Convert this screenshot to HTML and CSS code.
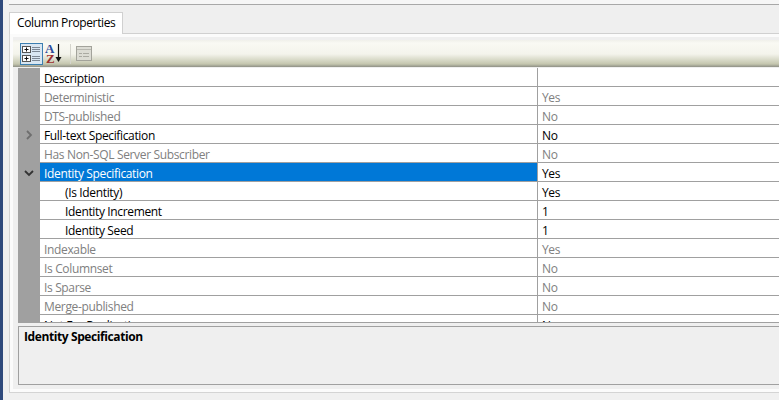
FILE: index.html
```html
<!DOCTYPE html>
<html lang="en">
<head>
    <meta charset="UTF-8">
    <title>Column Properties</title>
    <link rel="stylesheet" href="styles.css">
</head>
<body>
    <div class="window">
        <div class="top-rule"></div>
        <div class="tab-strip">
            <div class="tab">Column Properties</div>
        </div>
        <div class="panel">
            <div class="panel-inner">
                <div class="toolbar">
                    <button class="tool tool-active">
                        <svg width="21" height="20" viewBox="0 0 21 20">
                            <rect x="1.5" y="2.5" width="8" height="6" fill="#fff" stroke="#555"/>
                            <path d="M3.5 5.5h4M5.5 3.5v4" stroke="#111"/>
                            <rect x="1.5" y="11.5" width="8" height="6" fill="#fff" stroke="#555"/>
                            <path d="M3.5 14.5h4M5.5 12.5v4" stroke="#111"/>
                            <path d="M11 3.5h8M11 5.5h8M11 7.5h8M11 12.5h8M11 14.5h8M11 16.5h8" stroke="#7c8794"/>
                        </svg>
                    </button>
                    <div class="tool">
                        <svg width="20" height="22" viewBox="0 0 20 22">
                            <text x="0" y="10" class="sort-a">A</text>
                            <text x="1" y="20" class="sort-z">Z</text>
                            <path d="M13.5 1v15" stroke="#111" stroke-width="1.2"/>
                            <path d="M10.5 14h6l-3 5z" fill="#111"/>
                        </svg>
                    </div>
                    <div class="tool-sep"></div>
                    <div class="tool props-tool">
                        <svg width="18" height="18" viewBox="0 0 18 18">
                            <rect x="1.5" y="1.5" width="15" height="14" fill="#dcdcd4" stroke="#a3a39b"/>
                            <path d="M2 4.5h14" stroke="#b8b8b0"/>
                            <path d="M4 8.5h3M8 8.5h6M4 11.5h3M8 11.5h6" stroke="#aaaaa2"/>
                        </svg>
                    </div>
                </div>
                <div class="grid">
                    <div class="row"><div class="gutter"></div><div class="name">Description</div><div class="value"></div></div>
                    <div class="row muted"><div class="gutter"></div><div class="name">Deterministic</div><div class="value">Yes</div></div>
                    <div class="row muted"><div class="gutter"></div><div class="name">DTS-published</div><div class="value">No</div></div>
                    <div class="row">
                        <div class="gutter">
                            <svg width="10" height="10" viewBox="0 0 10 10"><path d="M3 1l4 4-4 4" fill="none" stroke="#6e6e6e" stroke-width="1.8"/></svg>
                        </div>
                        <div class="name">Full-text Specification</div><div class="value">No</div>
                    </div>
                    <div class="row muted"><div class="gutter"></div><div class="name">Has Non-SQL Server Subscriber</div><div class="value">No</div></div>
                    <div class="row selected">
                        <div class="gutter">
                            <svg width="10" height="10" viewBox="0 0 10 10"><path d="M1 3l4 4 4-4" fill="none" stroke="#333" stroke-width="1.8"/></svg>
                        </div>
                        <div class="name">Identity Specification</div><div class="value">Yes</div>
                    </div>
                    <div class="row child"><div class="gutter"></div><div class="name">(Is Identity)</div><div class="value">Yes</div></div>
                    <div class="row child"><div class="gutter"></div><div class="name">Identity Increment</div><div class="value">1</div></div>
                    <div class="row child"><div class="gutter"></div><div class="name">Identity Seed</div><div class="value">1</div></div>
                    <div class="row muted"><div class="gutter"></div><div class="name">Indexable</div><div class="value">Yes</div></div>
                    <div class="row muted"><div class="gutter"></div><div class="name">Is Columnset</div><div class="value">No</div></div>
                    <div class="row muted"><div class="gutter"></div><div class="name">Is Sparse</div><div class="value">No</div></div>
                    <div class="row muted"><div class="gutter"></div><div class="name">Merge-published</div><div class="value">No</div></div>
                    <div class="row"><div class="gutter"></div><div class="name">Not For Replication</div><div class="value">No</div></div>
                </div>
                <div class="help">Identity Specification</div>
            </div>
        </div>
    </div>
</body>
</html>
```

FILE: styles.css
```css
html, body {
    margin: 0;
    padding: 0;
    height: 100%;
    overflow: hidden;
}

body {
    font-family: "Open Sans", "Noto Sans", sans-serif;
    font-size: 12px;
    color: #000;
    background-color: #efefef;
}

.window {
    height: 400px;
    box-sizing: border-box;
    border-left: 3px solid #2f4a7c;
    padding-left: 1px;
    background-color: #f0f0f0;
    display: flex;
    flex-direction: column;
}

.top-rule {
    height: 4px;
    margin-left: 5px;
    background-color: #f6f6f6;
    border-bottom: 1px solid #a8a8a8;
    flex-shrink: 0;
}

.tab-strip {
    height: 29px;
    margin-left: 5px;
    box-sizing: border-box;
    padding-top: 7px;
    background-color: #efefef;
    border-bottom: 1px solid #d0d0d0;
    display: flex;
    flex-shrink: 0;
}

.tab {
    width: 114px;
    height: 22px;
    box-sizing: border-box;
    padding-left: 7px;
    line-height: 20px;
    background-color: #fff;
    border: 1px solid #d0d0d0;
    border-bottom: none;
    position: relative;
    letter-spacing: -0.38px;
}

.panel {
    height: 359px;
    margin-left: 5px;
    box-sizing: border-box;
    padding: 3px 0 3px 3px;
    background-color: #fbfbfb;
    border-left: 1px solid #d4d4d4;
    border-bottom: 1px solid #d4d4d4;
    flex-shrink: 0;
}

.panel-inner {
    height: 352px;
    box-sizing: border-box;
    padding-top: 3px;
    background-color: #efefef;
}

.toolbar {
    height: 27px;
    box-sizing: border-box;
    padding-left: 7px;
    display: flex;
    align-items: center;
    gap: 1px;
    background: linear-gradient(#f0f0ea 0, #f9f9f3 3px, #f4f4ec 14px, #c4c6ae 24px, #8f9086 27px);
}

.tool {
    width: 22px;
    height: 22px;
    box-sizing: border-box;
    padding: 0;
    border: 1px solid transparent;
    background: none;
    display: flex;
    align-items: center;
    justify-content: center;
}

.tool-active {
    width: 23px;
    border-color: #3c7fb1;
    background-color: #d8e6f2;
}

.props-tool {
    width: 20px;
    margin-left: 1px;
}

.sort-a, .sort-z {
    font-family: "Liberation Serif", serif;
    font-size: 13px;
    font-weight: bold;
}

.sort-a {
    fill: #2a4a9a;
}

.sort-z {
    fill: #9c2f2f;
}

.tool-sep {
    width: 1px;
    height: 20px;
    margin: 0 1px 0 3px;
    background-color: #d4d4cc;
}

.grid {
    height: 255px;
    margin: 1px 0 0 5px;
    overflow: hidden;
    border-bottom: 1px solid #a0a0a0;
    box-sizing: border-box;
}

.row {
    height: 19px;
    display: flex;
    line-height: 17px;
    background-color: #fff;
}

.gutter {
    width: 22px;
    flex-shrink: 0;
    background-color: #a0a0a0;
    display: flex;
    align-items: center;
    justify-content: center;
}

.name {
    width: 498px;
    flex-shrink: 0;
    box-sizing: border-box;
    padding: 2px 0 0 4px;
    border-bottom: 1px solid #a0a0a0;
    border-right: 1px solid #a0a0a0;
    letter-spacing: -0.35px;
    white-space: nowrap;
}

.value {
    flex: 1;
    box-sizing: border-box;
    padding: 2px 0 0 4px;
    border-bottom: 1px solid #a0a0a0;
    letter-spacing: -0.35px;
}

.muted .name, .muted .value {
    color: #808080;
}

.selected .name {
    background-color: #0078d7;
    color: #fff;
}

.child .name {
    padding-left: 25px;
}

.help {
    height: 59px;
    box-sizing: border-box;
    margin: 3px 0 0 5px;
    padding: 1px 0 0 5px;
    font-weight: bold;
    letter-spacing: -0.4px;
    background-color: #efefef;
    border: 1px solid #a0a0a0;
    border-right: none;
}
```
